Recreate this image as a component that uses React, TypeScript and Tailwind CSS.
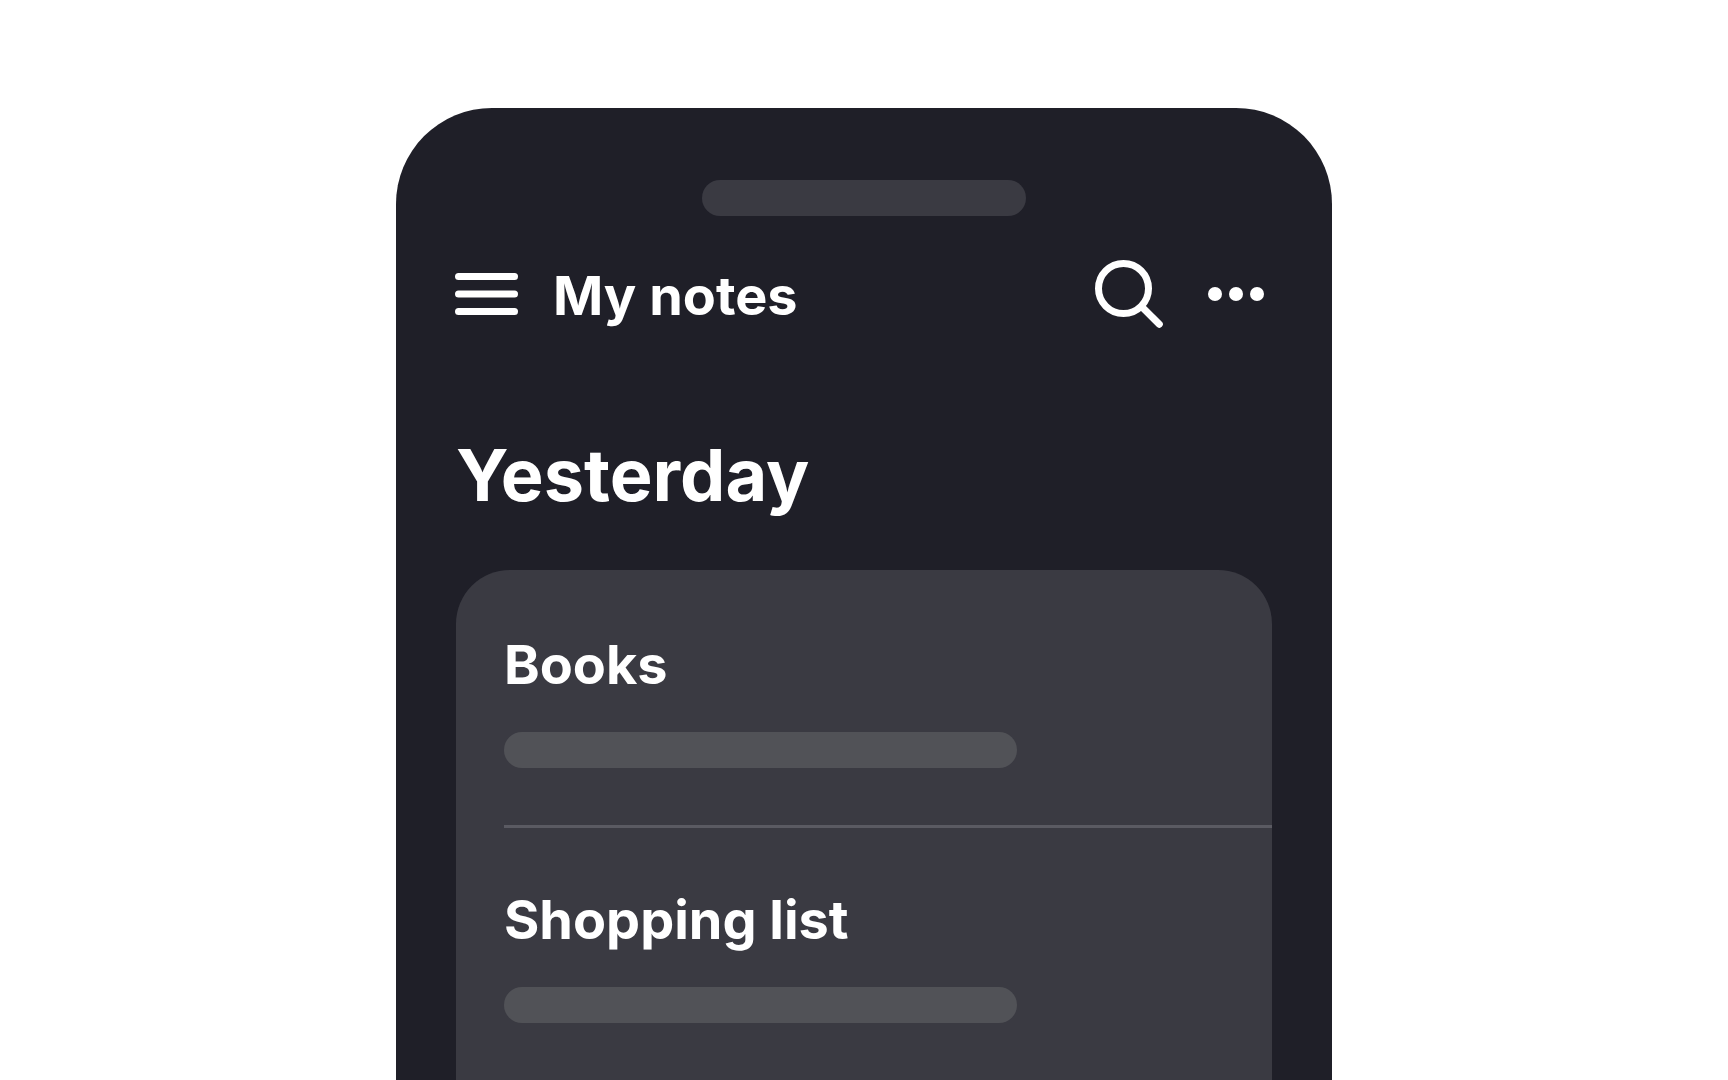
import React from 'react';

interface Note {
  id: number;
  title: string;
}

const notes: Note[] = [
  { id: 1, title: 'Books' },
  { id: 2, title: 'Shopping list' },
];

const MenuIcon: React.FC = () => (
  <svg width="63" height="44" viewBox="0 0 63 44" fill="currentColor" aria-hidden="true">
    <rect x="0" y="1" width="63" height="7" rx="3.5" />
    <rect x="0" y="18.5" width="63" height="7" rx="3.5" />
    <rect x="0" y="36" width="63" height="7" rx="3.5" />
  </svg>
);

const SearchIcon: React.FC = () => (
  <svg width="68" height="68" viewBox="0 0 68 68" fill="none" stroke="currentColor" strokeWidth="7" strokeLinecap="round" aria-hidden="true">
    <circle cx="28.5" cy="28.5" r="25" />
    <path d="M47 47 64.3 64.3" />
  </svg>
);

const MoreIcon: React.FC = () => (
  <svg width="56" height="14" viewBox="0 0 56 14" fill="currentColor" aria-hidden="true">
    <circle cx="7" cy="7" r="7" />
    <circle cx="28" cy="7" r="7" />
    <circle cx="49" cy="7" r="7" />
  </svg>
);

const NoteRow: React.FC<{ note: Note }> = ({ note }) => (
  <li className="ml-12 border-b-[3px] border-[#5a5a62] pt-15 pb-[57px] last:border-b-0">
    <h3 className="text-[54px] leading-[64px] font-bold">{note.title}</h3>
    <div className="mt-[35px] h-9 w-[513px] max-w-full rounded-full bg-[#515257]" />
  </li>
);

export default function App() {
  return (
    <div className="flex min-h-screen flex-col bg-white pt-[108px] font-['Inter',sans-serif] text-white">
      <main className="mx-auto flex w-full max-w-[936px] flex-1 flex-col rounded-t-[96px] bg-[#1f1f28] pt-[72px]">
        <div className="mx-auto h-9 w-[324px] rounded-full bg-[#3a3a42]" />

        <header className="mt-11 flex items-center pr-[68px] pl-[59px]">
          <button type="button" aria-label="Open menu">
            <MenuIcon />
          </button>
          <h1 className="ml-[35px] flex-1 pt-1 text-[54px] leading-[64px] font-bold">My notes</h1>
          <button type="button" aria-label="Search notes">
            <SearchIcon />
          </button>
          <button type="button" aria-label="More options" className="ml-[45px]">
            <MoreIcon />
          </button>
        </header>

        <section className="mt-[103px] flex flex-1 flex-col px-15">
          <h2 className="text-[72px] leading-[88px] font-bold">Yesterday</h2>
          <ul className="mt-[51px] flex-1 rounded-t-[54px] bg-[#3a3a42] pt-[3px]">
            {notes.map(note => (
              <NoteRow key={note.id} note={note} />
            ))}
          </ul>
        </section>
      </main>
    </div>
  );
}
